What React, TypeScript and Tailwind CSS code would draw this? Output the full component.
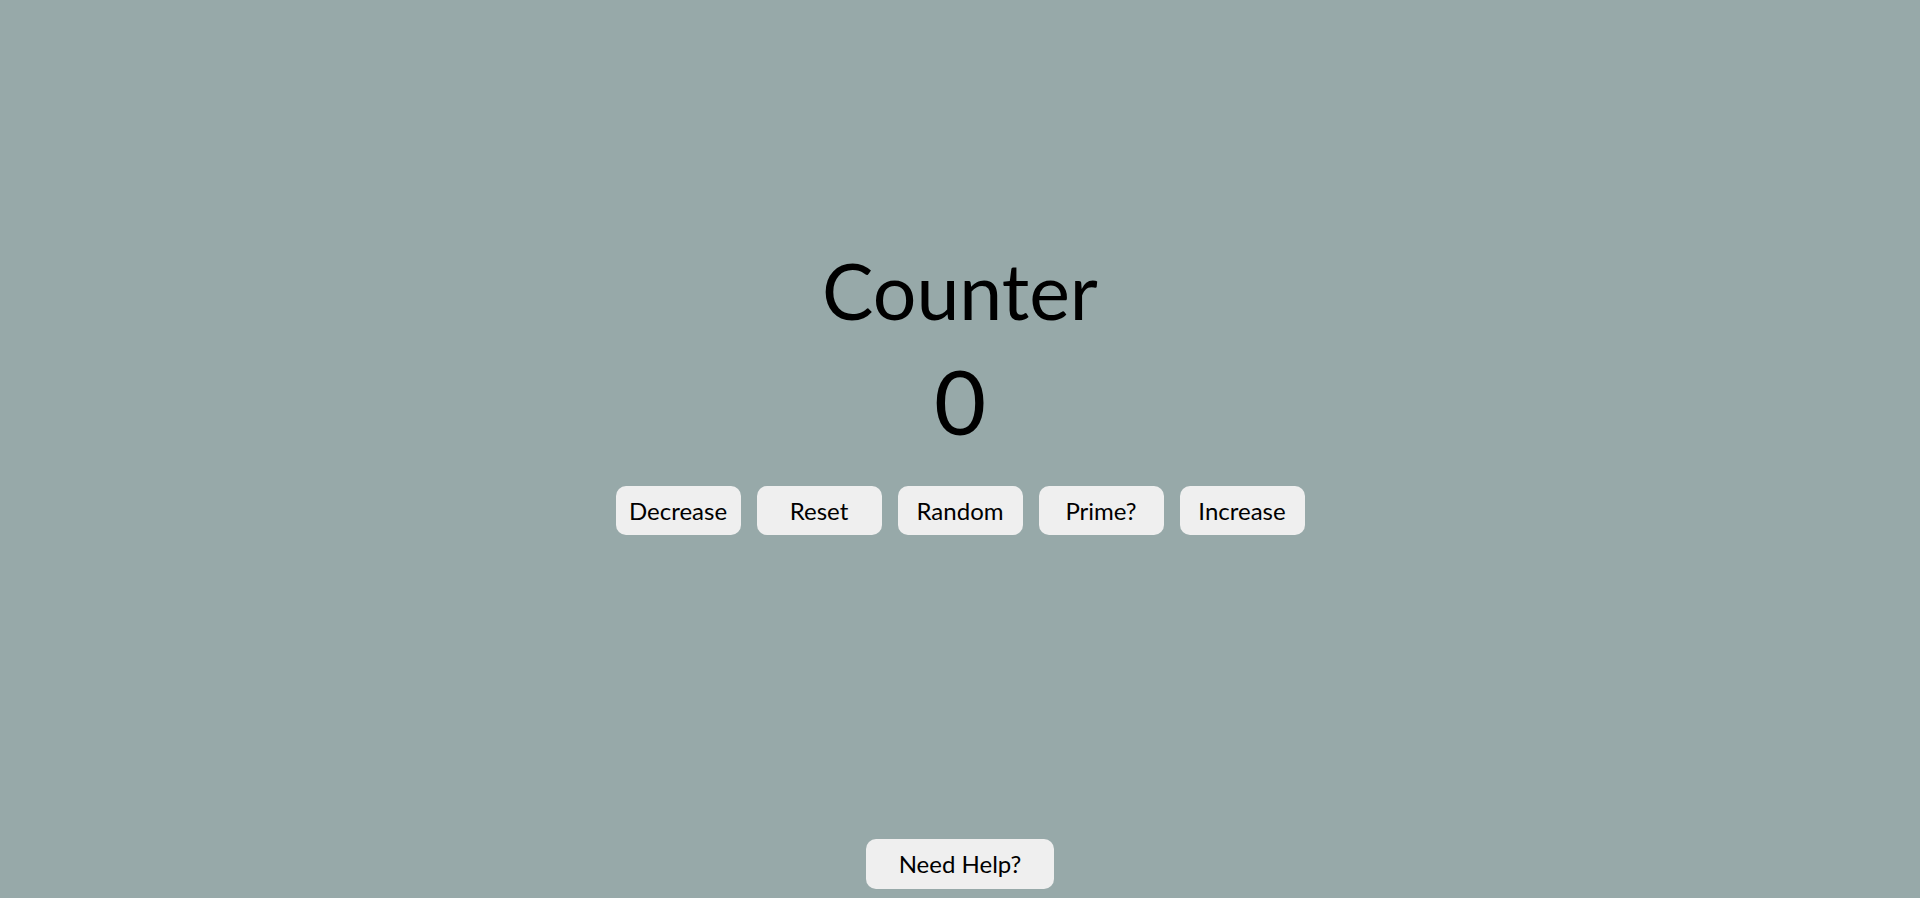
import React, { useState } from "react";

const btn =
  "w-[125px] h-[49px] rounded-[10px] bg-[#efefef] text-black text-[24px] font-['Lato',sans-serif] cursor-pointer";

function isPrime(n: number) {
  if (n < 2) return false;
  for (let i = 2; i * i <= n; i++) if (n % i === 0) return false;
  return true;
}

export default function App() {
  const [count, setCount] = useState(0);
  return (
    <div className="h-screen w-full bg-[#97a9a9] flex flex-col items-center font-['Lato',sans-serif] text-black overflow-hidden">
      <h1 className="mt-[245px] text-[77px] leading-[90px] font-normal">Counter</h1>
      <div className="mt-[12px] text-[90px] leading-[106px]">{count}</div>
      <div className="mt-[33px] flex gap-4">
        <button className={btn} onClick={() => setCount((c) => c - 1)}>Decrease</button>
        <button className={btn} onClick={() => setCount(0)}>Reset</button>
        <button className={btn} onClick={() => setCount(Math.floor(Math.random() * 100))}>Random</button>
        <button className={btn} onClick={() => alert(isPrime(count) ? "Prime" : "Not prime")}>Prime?</button>
        <button className={btn} onClick={() => setCount((c) => c + 1)}>Increase</button>
      </div>
      <button className="mt-auto mb-[9px] w-[188px] h-[50px] rounded-[10px] bg-[#efefef] text-black text-[24px] font-['Lato',sans-serif]">
        Need Help?
      </button>
    </div>
  );
}
